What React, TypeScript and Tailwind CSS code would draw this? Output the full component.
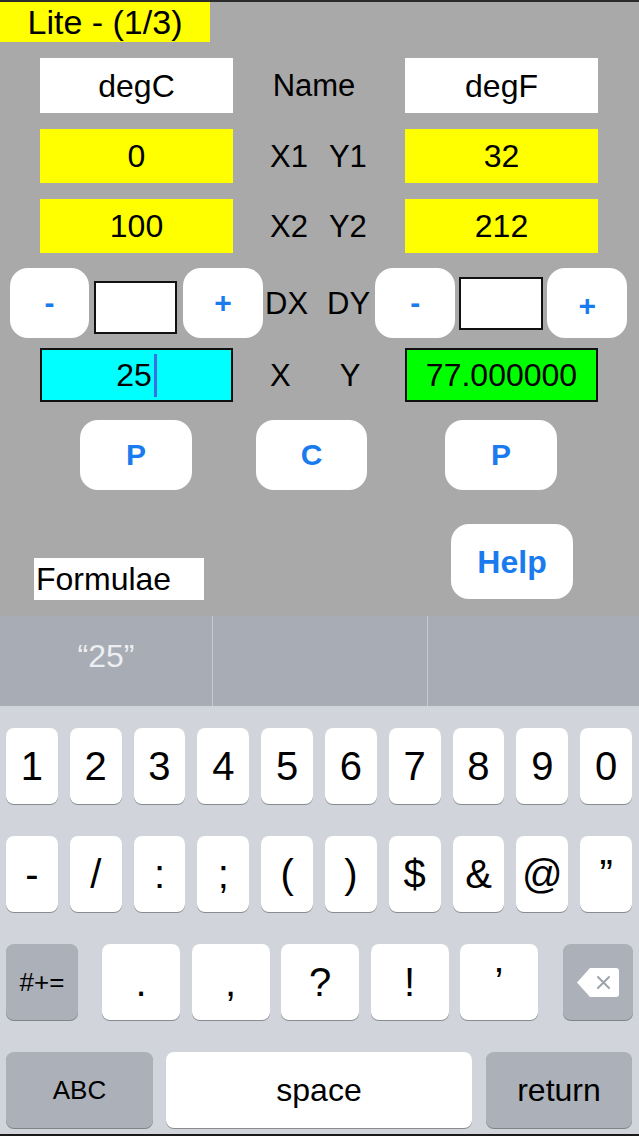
import React from "react";

const font = { fontFamily: '"Liberation Sans", Arial, sans-serif' };

function Btn({ label, className }: { label: string; className: string }) {
  return (
    <div
      className={
        "bg-white rounded-[18px] flex items-center justify-center font-bold text-[#1a7bef] leading-none " +
        className
      }
    >
      {label}
    </div>
  );
}

function Key({ label, className = "" }: { label: React.ReactNode; className?: string }) {
  return (
    <div
      className={
        "h-[76px] rounded-[8px] bg-white shadow-[0_1px_0_#898b90] flex items-center justify-center text-black leading-none " +
        className
      }
    >
      {label}
    </div>
  );
}

function GreyKey({ label, className = "" }: { label: React.ReactNode; className?: string }) {
  return (
    <div
      className={
        "h-[76px] rounded-[8px] bg-[#abb0b9] shadow-[0_1px_0_#7f838a] flex items-center justify-center text-black leading-none " +
        className
      }
    >
      {label}
    </div>
  );
}

const row1 = ["1", "2", "3", "4", "5", "6", "7", "8", "9", "0"];
const row2 = ["-", "/", ":", ";", "(", ")", "$", "&", "@", "\u201D"];
const row3 = [".", ",", "?", "!", "\u2019"];

export default function App() {
  return (
    <div className="w-[639px] h-[1136px] flex flex-col overflow-hidden" style={font}>
      {/* app area */}
      <div className="h-[616px] bg-[#a9a9a9] flex flex-col text-[32px] text-black leading-none">
        <div className="h-[2px] bg-[#2b2b2b]" />
        <div className="w-[210px] h-[40px] bg-[#ffff00] flex items-center justify-center text-[34px]">Lite - (1/3)</div>

        {/* names */}
        <div className="mt-[16px] flex pl-[40px] h-[55px]">
          <div className="w-[193px] bg-white flex items-center justify-center">degC</div>
          <div className="w-[172px] flex items-center justify-center pr-[10px] text-[31px]">Name</div>
          <div className="w-[193px] bg-white flex items-center justify-center">degF</div>
        </div>

        {/* point 1 */}
        <div className="mt-[16px] flex pl-[40px] h-[54px]">
          <div className="w-[193px] bg-[#ffff00] flex items-center justify-center">0</div>
          <div className="w-[172px] flex items-center pl-[37px] gap-[21px] text-[31px]">
            <span>X1</span>
            <span>Y1</span>
          </div>
          <div className="w-[193px] bg-[#ffff00] flex items-center justify-center">32</div>
        </div>

        {/* point 2 */}
        <div className="mt-[16px] flex pl-[40px] h-[54px]">
          <div className="w-[193px] bg-[#ffff00] flex items-center justify-center">100</div>
          <div className="w-[172px] flex items-center pl-[37px] gap-[21px] text-[31px]">
            <span>X2</span>
            <span>Y2</span>
          </div>
          <div className="w-[193px] bg-[#ffff00] flex items-center justify-center">212</div>
        </div>

        {/* steps */}
        <div className="mt-[15px] flex pl-[10px] h-[70px]">
          <Btn label="-" className="w-[79px] h-[70px] text-[30px]" />
          <div className="ml-[5px] mt-[13px] w-[83px] h-[53px] bg-white border-2 border-[#111]" />
          <Btn label="+" className="ml-[6px] w-[80px] h-[70px] text-[30px]" />
          <div className="ml-[2px] flex items-center gap-[19px] text-[31px]">
            <span>DX</span>
            <span>DY</span>
          </div>
          <Btn label="-" className="ml-[5px] w-[80px] h-[70px] text-[30px]" />
          <div className="ml-[4px] mt-[9px] w-[84px] h-[53px] bg-white border-2 border-[#111]" />
          <Btn label="+" className="ml-[4px] w-[80px] h-[70px] text-[30px] pt-[6px]" />
        </div>

        {/* x / y */}
        <div className="mt-[10px] flex pl-[40px] h-[54px]">
          <div className="w-[193px] bg-[#00ffff] border-2 border-[#111] flex items-center justify-center">
            <span>25</span>
            <span className="ml-[2px] w-[3px] h-[43px] bg-[#3a6fe6]" />
          </div>
          <div className="w-[172px] flex items-center pl-[37px] gap-[49px] text-[31px]">
            <span>X</span>
            <span>Y</span>
          </div>
          <div className="w-[193px] bg-[#00ff00] border-2 border-[#111] flex items-center justify-center">77.000000</div>
        </div>

        {/* actions */}
        <div className="mt-[18px] flex pl-[80px] h-[70px]">
          <Btn label="P" className="w-[112px] h-[70px] text-[30px]" />
          <Btn label="C" className="ml-[64px] w-[111px] h-[70px] text-[30px]" />
          <Btn label="P" className="ml-[78px] w-[112px] h-[70px] text-[30px]" />
        </div>

        <div className="mt-[34px] flex h-[76px]">
          <div className="ml-[34px] self-end w-[170px] h-[42px] bg-white flex items-center pl-[2px]">Formulae</div>
          <Btn label="Help" className="ml-[247px] w-[122px] h-[75px] text-[32px]" />
        </div>
      </div>

      {/* suggestion bar */}
      <div className="h-[90px] bg-[#a8acb4] flex">
        <div className="w-[212px] flex items-center justify-center pb-[10px] text-[32px] text-[#eceef2]">
          {"\u201C25\u201D"}
        </div>
        <div className="w-[1px] bg-[#c6c9cf]" />
        <div className="w-[214px]" />
        <div className="w-[1px] bg-[#c6c9cf]" />
        <div className="flex-1" />
      </div>

      {/* keyboard */}
      <div className="flex-1 bg-[#d1d4da] flex flex-col pt-[22px]">
        <div className="grid grid-cols-10 gap-[12px] pl-[6px] pr-[7px]">
          {row1.map((k) => (
            <Key key={k} label={k} className="text-[40px]" />
          ))}
        </div>
        <div className="mt-[32px] grid grid-cols-10 gap-[12px] pl-[6px] pr-[7px]">
          {row2.map((k) => (
            <Key key={k} label={k} className="text-[40px]" />
          ))}
        </div>
        <div className="mt-[32px] flex pl-[6px]">
          <GreyKey label="#+=" className="w-[72px] text-[26px]" />
          <div className="ml-[24px] flex gap-[11.5px]">
            {row3.map((k) => (
              <Key key={k} label={k} className="w-[78px] text-[40px]" />
            ))}
          </div>
          <GreyKey
            className="ml-[25px] w-[70px]"
            label={
              <svg width="44" height="31" viewBox="0 0 44 31">
                <path
                  d="M14 1 H40 a3 3 0 0 1 3 3 V27 a3 3 0 0 1 -3 3 H14 L1 15.5 Z"
                  fill="#ffffff"
                />
                <path d="M22 10 L33 21 M33 10 L22 21" stroke="#9ea3ab" strokeWidth="2" strokeLinecap="round" />
              </svg>
            }
          />
        </div>
        <div className="mt-[32px] flex pl-[6px]">
          <GreyKey label="ABC" className="w-[147px] text-[26px]" />
          <Key label="space" className="ml-[13px] w-[306px] text-[32px]" />
          <GreyKey label="return" className="ml-[14px] w-[146px] text-[32px]" />
        </div>
        <div className="mt-auto h-[2px] bg-[#1a1a1a]" />
      </div>
    </div>
  );
}
